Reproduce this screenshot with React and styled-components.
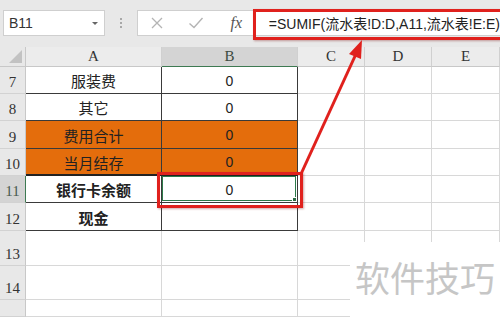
import React from "react";
import styled, { createGlobalStyle } from "styled-components";

const Global = createGlobalStyle`
  html, body { margin: 0; padding: 0; background: #fff; }
  body { overflow: hidden; }
  * { box-sizing: border-box; }
`;

const Page = styled.div`
  position: relative;
  width: 500px;
  height: 317px;
  overflow: hidden;
  background: #e8e8e8;
  font-family: "Noto Sans CJK SC", "Liberation Sans", sans-serif;
`;

const Toolbar = styled.div`
  height: 47px;
  display: flex;
  align-items: flex-start;
  padding: 10px 0 0 3px;
`;

const NameBox = styled.div`
  width: 104px;
  height: 26px;
  background: #fff;
  border: 1px solid #cfcfcf;
  display: flex;
  align-items: center;
  justify-content: space-between;
  padding: 0 6px 0 5px;
  font-family: "Liberation Sans", sans-serif;
  font-size: 14px;
  color: #333;
`;

const Caret = styled.span`
  width: 0;
  height: 0;
  border-left: 3px solid transparent;
  border-right: 3px solid transparent;
  border-top: 3px solid #666;
`;

const Dots = styled.div`
  width: 32px;
  height: 26px;
  display: flex;
  flex-direction: column;
  align-items: center;
  justify-content: center;
  gap: 2px;
  & > i {
    width: 2px;
    height: 2px;
    background: #a8a8a8;
    display: block;
  }
`;

const FormulaBox = styled.div`
  flex: 1;
  height: 26px;
  background: #fff;
  border: 1px solid #cfcfcf;
  border-right: none;
  display: flex;
  align-items: center;
`;

const IconSlot = styled.div`
  width: 39px;
  height: 24px;
  display: flex;
  align-items: center;
  justify-content: center;
`;

const Fx = styled.span`
  font-family: "Liberation Serif", serif;
  font-style: italic;
  font-size: 16px;
  color: #555;
  margin-left: 2px;
`;

const FormulaText = styled.div`
  padding-left: 14px;
  font-family: "Liberation Sans", "Noto Sans CJK SC", sans-serif;
  font-size: 14px;
  color: #222;
  white-space: nowrap;
`;

const Sheet = styled.div`
  display: grid;
  grid-template-columns: 26px 136px 136px 67px 67px 68px;
  grid-template-rows: 20px 27px 27px 28px 27px 27px 28px 35px 34px 17px;
  background: #fff;
`;

const Corner = styled.div`
  position: relative;
  background: #e8e8e8;
  border-right: 1px solid #c8c8c8;
  border-bottom: 1px solid #c8c8c8;
  &::after {
    content: "";
    position: absolute;
    right: 3px;
    bottom: 3px;
    width: 0;
    height: 0;
    border-left: 13px solid transparent;
    border-bottom: 13px solid #c2c2c2;
  }
`;

const ColHeader = styled.div`
  background: ${(p) => (p.$active ? "#d4d4d4" : "#ececec")};
  border-right: 1px solid #d0d0d0;
  border-bottom: 1px solid ${(p) => (p.$active ? "#3e7a52" : "#c8c8c8")};
  display: flex;
  align-items: center;
  justify-content: center;
  font-family: "Liberation Serif", serif;
  font-size: 15px;
  color: ${(p) => (p.$active ? "#3c4a40" : "#333")};
`;

const RowHeader = styled.div`
  background: ${(p) => (p.$active ? "#d4d4d4" : "#e8e8e8")};
  border-right: 1px solid ${(p) => (p.$active ? "#3e7a52" : "#c8c8c8")};
  border-bottom: 1px solid #d2d2d2;
  display: flex;
  align-items: flex-end;
  justify-content: center;
  padding-bottom: 2px;
  font-family: "Liberation Serif", serif;
  font-size: 15px;
  color: ${(p) => (p.$active ? "#4a5a50" : "#333")};
`;

const Cell = styled.div`
  position: relative;
  background: ${(p) => p.$fill || "#fff"};
  border-right: 1px solid ${(p) => (p.$table ? "#3a3a3a" : "#d8d8d8")};
  border-bottom: ${(p) => p.$bottom || "1px solid #d8d8d8"};
  display: flex;
  align-items: center;
  justify-content: center;
  padding-top: 1px;
  font-family: "Noto Sans CJK SC", "Liberation Sans", sans-serif;
  font-size: 15px;
  font-weight: ${(p) => (p.$bold ? 700 : 400)};
  color: #222;
`;

const Num = styled.span`
  font-family: "Liberation Sans", sans-serif;
  font-size: 14px;
`;

const Selected = styled.div`
  position: absolute;
  inset: 0 1px 1px 0;
  border: 1px solid #2d7a4a;
`;

const Handle = styled.div`
  position: absolute;
  right: -2px;
  bottom: -2px;
  width: 5px;
  height: 5px;
  background: #2d6b44;
  border: 1px solid #fff;
`;

const RedBox = styled.div`
  position: absolute;
  border: 3px solid #e0211d;
  box-shadow: 1px 1px 2px rgba(120, 0, 0, 0.35);
  pointer-events: none;
`;

const Overlay = styled.svg`
  position: absolute;
  left: 0;
  top: 0;
  pointer-events: none;
`;

const Watermark = styled.div`
  position: absolute;
  left: 350px;
  top: 242px;
  width: 150px;
  height: 75px;
  background: #fff;
  padding: 17px 0 0 5px;
  font-family: "Noto Sans CJK SC", sans-serif;
  font-size: 35px;
  line-height: 1;
  color: #c6c6c6;
  white-space: nowrap;
`;

const ORANGE = "#e46d0c";
const DARK = "1px solid #3a3a3a";

const rows = [
  { n: 7, a: "服装费", b: "0" },
  { n: 8, a: "其它", b: "0" },
  { n: 9, a: "费用合计", b: "0", fill: ORANGE },
  { n: 10, a: "当月结存", b: "0", fill: ORANGE, bottom: "2px solid #222" },
  { n: 11, a: "银行卡余额", b: "0", bold: true, active: true },
  { n: 12, a: "现金", b: "", bold: true },
];

export default function App() {
  return (
    <Page>
      <Global />
      <Toolbar>
        <NameBox>
          B11
          <Caret />
        </NameBox>
        <Dots>
          <i />
          <i />
          <i />
        </Dots>
        <FormulaBox>
          <IconSlot>
            <svg width="14" height="14" viewBox="0 0 14 14">
              <path d="M2 2 L12 12 M12 2 L2 12" stroke="#b4b4b4" strokeWidth="1.3" fill="none" />
            </svg>
          </IconSlot>
          <IconSlot>
            <svg width="16" height="14" viewBox="0 0 16 14">
              <path d="M1.5 7.5 L6 11.5 L14.5 2" stroke="#b4b4b4" strokeWidth="1.4" fill="none" />
            </svg>
          </IconSlot>
          <IconSlot>
            <Fx>fx</Fx>
          </IconSlot>
          <FormulaText>=SUMIF(流水表!D:D,A11,流水表!E:E)</FormulaText>
        </FormulaBox>
      </Toolbar>
      <Sheet>
        <Corner />
        <ColHeader>A</ColHeader>
        <ColHeader $active>B</ColHeader>
        <ColHeader>C</ColHeader>
        <ColHeader>D</ColHeader>
        <ColHeader>E</ColHeader>
        {rows.map((r) => (
          <React.Fragment key={r.n}>
            <RowHeader $active={r.active}>{r.n}</RowHeader>
            <Cell $table $fill={r.fill} $bold={r.bold} $bottom={r.bottom || DARK}>
              {r.a}
            </Cell>
            <Cell $table $fill={r.fill} $bottom={r.bottom || DARK}>
              {r.b && <Num>{r.b}</Num>}
              {r.active && (
                <Selected>
                  <Handle />
                </Selected>
              )}
            </Cell>
            <Cell />
            <Cell />
            <Cell />
          </React.Fragment>
        ))}
        {[13, 14, 15].map((n) => (
          <React.Fragment key={n}>
            <RowHeader>{n === 15 ? "" : n}</RowHeader>
            <Cell />
            <Cell />
            <Cell />
            <Cell />
            <Cell />
          </React.Fragment>
        ))}
      </Sheet>
      <Watermark>软件技巧</Watermark>
      <RedBox style={{ left: 253, top: 9, width: 250, height: 31 }} />
      <RedBox style={{ left: 157, top: 172, width: 146, height: 36 }} />
      <Overlay width="500" height="317" viewBox="0 0 500 317">
        <line x1="301" y1="174" x2="356" y2="54" stroke="#e0211d" strokeWidth="3" />
        <polygon points="362,40 349,54 361,59" fill="#e0211d" />
      </Overlay>
    </Page>
  );
}
